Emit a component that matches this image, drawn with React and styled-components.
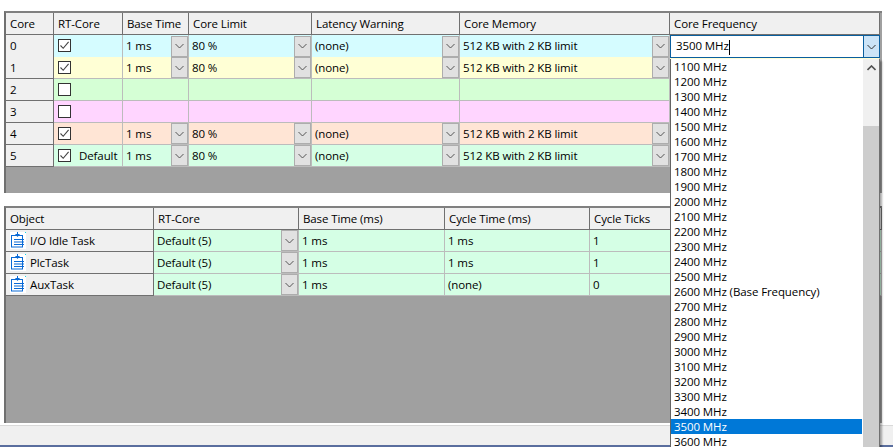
import React from "react";
import styled, { createGlobalStyle } from "styled-components";

const Global = createGlobalStyle`
  html, body { margin: 0; padding: 0; height: 447px; overflow: hidden; background: #fff; }
  body { font-family: "Open Sans", "Noto Sans", "Liberation Sans", sans-serif; font-size: 11.5px; letter-spacing: -0.1px; color: #000; }
`;

const Page = styled.div`
  position: relative;
  width: 893px;
  height: 447px;
  padding-top: 11px;
  box-sizing: border-box;
  display: flex;
  flex-direction: column;
  overflow: hidden;
`;

const Panel = styled.section`
  margin-left: 4px;
  margin-top: ${(p) => p.$top}px;
  width: 878px;
  height: ${(p) => p.$height}px;
  box-sizing: border-box;
  background: #a0a0a0;
  border-left: 2px solid #707070;
  border-top: 2px solid #808080;
  flex: none;
`;

const Row = styled.div`
  display: grid;
  grid-template-columns: ${(p) => p.$cols};
  height: 22px;
`;

const Head = styled.div`
  background: #f0f0f0;
  box-sizing: border-box;
  border-right: 1px solid #707070;
  border-bottom: 1px solid #707070;
  padding: 0 0 1px 4px;
  display: flex;
  align-items: center;
  white-space: nowrap;
  overflow: hidden;
`;

const RowHead = styled(Head)`
  gap: 4px;
`;

const IconBox = styled.span`
  width: 16px;
  height: 17px;
  flex: none;
  background: #fff;
  display: flex;
  align-items: center;
  justify-content: center;
`;

const Cell = styled.div`
  background: ${(p) => p.$bg};
  box-sizing: border-box;
  border-right: 1px solid #bcbcbc;
  border-bottom: 1px solid #bcbcbc;
  padding: 0 0 1px 3px;
  display: flex;
  align-items: center;
  justify-content: space-between;
  white-space: nowrap;
  overflow: hidden;
`;

const CheckCell = styled(Cell)`
  justify-content: flex-start;
  padding-left: 4px;
  gap: 8px;
`;

const Check = styled.span`
  width: 13px;
  height: 13px;
  box-sizing: border-box;
  flex: none;
  border: 1px solid #333;
  background: #fff;
  display: flex;
  align-items: center;
  justify-content: center;
`;

const Arrow = styled.span`
  width: 17px;
  height: 21px;
  box-sizing: border-box;
  flex: none;
  margin-top: 1px;
  background: #e1e1e1;
  border: 1px solid #adadad;
  display: flex;
  align-items: center;
  justify-content: center;
`;

const ActiveCell = styled.div`
  box-sizing: border-box;
  height: 23px;
  background: #fff;
  border: 1px solid #0a5f9e;
  display: flex;
  align-items: center;
  justify-content: space-between;
  padding-left: 5px;
  position: relative;
  z-index: 2;
`;

const Caret = styled.span`
  display: inline-block;
  width: 1px;
  height: 15px;
  background: #000;
  vertical-align: middle;
`;

const ActiveArrow = styled.span`
  width: 16px;
  height: 21px;
  box-sizing: border-box;
  border-left: 1px solid #0a5f9e;
  background: #cce4f7;
  display: flex;
  align-items: center;
  justify-content: center;
`;

const Footer = styled.div`
  margin-top: 2px;
  height: 19px;
  flex: none;
  background: #f0f0f0;
  border-top: 1px solid #d9d9d9;
`;

const Titlebar = styled.div`
  height: 2px;
  flex: none;
  background: #5a6e9e;
`;

const Dropdown = styled.div`
  position: absolute;
  left: 670px;
  top: 59px;
  width: 210px;
  height: 392px;
  box-sizing: border-box;
  background: #fff;
  border-left: 1px solid #646464;
  border-right: 1px solid #707070;
  box-shadow: 2px 2px 2px rgba(0, 0, 0, 0.35);
  display: grid;
  grid-template-columns: 1fr 16px;
  z-index: 3;
`;

const List = styled.ul`
  list-style: none;
  margin: 0;
  padding: 0;
  overflow: hidden;
`;

const Item = styled.li`
  height: 15px;
  line-height: 15px;
  margin-right: 1px;
  padding-left: 3px;
  white-space: nowrap;
  background: ${(p) => (p.$selected ? "#0078d7" : "transparent")};
  color: ${(p) => (p.$selected ? "#fff" : "#000")};
`;

const Track = styled.div`
  background: #f0f0f0;
  display: flex;
  flex-direction: column;
`;

const UpButton = styled.div`
  height: 17px;
  flex: none;
  display: flex;
  align-items: center;
  justify-content: center;
`;

const Thumb = styled.div`
  margin-top: 50px;
  flex: 1;
  background: #cdcdcd;
`;

const Chevron = ({ color = "#555" }) => (
  <svg width="9" height="6" viewBox="0 0 9 6" fill="none">
    <path d="M0.5 1 L4.5 5 L8.5 1" stroke={color} strokeWidth="1" />
  </svg>
);

const Tick = () => (
  <svg width="11" height="11" viewBox="0 0 11 11" fill="none">
    <path d="M1.5 5.5 L4.2 8.3 L9.6 1.8" stroke="#444" strokeWidth="1.1" />
  </svg>
);

const TaskIcon = () => (
  <svg width="15" height="16" viewBox="0 0 15 16" fill="none">
    <rect x="0.5" y="3.5" width="11" height="11.5" fill="#fff" stroke="#0a6ad6" />
    <path d="M3 7.5H13M3 10H13M3 12.5H13" stroke="#0a6ad6" />
    <path d="M4 2H9L6.5 5Z" fill="#0a6ad6" />
    <path d="M6.5 0V3" stroke="#0a6ad6" />
    <rect x="14" y="0" width="1" height="1" fill="#19d3e8" />
  </svg>
);

const topCols = "48px 69px 66px 123px 148px 210px 210px";
const botCols = "148px 145px 146px 145px 1fr";

const cores = [
  { id: 0, bg: "#d5fcff", on: true, full: true, active: true },
  { id: 1, bg: "#ffffd5", on: true, full: true },
  { id: 2, bg: "#d5ffd5" },
  { id: 3, bg: "#ffd5ff" },
  { id: 4, bg: "#ffe5d5", on: true, full: true },
  { id: 5, bg: "#d5ffe5", on: true, full: true, note: "Default" },
];

const tasks = [
  { name: "I/O Idle Task", cycle: "1 ms", ticks: "1" },
  { name: "PlcTask", cycle: "1 ms", ticks: "1" },
  { name: "AuxTask", cycle: "(none)", ticks: "0" },
];

const freqs = Array.from({ length: 26 }, (_, i) => 1100 + i * 100);

const Combo = ({ bg, text }) => (
  <Cell $bg={bg}>
    {text}
    <Arrow>
      <Chevron />
    </Arrow>
  </Cell>
);

export default function App() {
  return (
    <Page>
      <Global />
      <Panel $top={0} $height={182}>
        <Row $cols={topCols}>
          {["Core", "RT-Core", "Base Time", "Core Limit", "Latency Warning", "Core Memory", "Core Frequency"].map((h) => (
            <Head key={h}>{h}</Head>
          ))}
        </Row>
        {cores.map((c) => (
          <Row key={c.id} $cols={topCols}>
            <RowHead>{c.id}</RowHead>
            <CheckCell $bg={c.bg}>
              <Check>{c.on && <Tick />}</Check>
              {c.note}
            </CheckCell>
            {c.full ? (
              <>
                <Combo bg={c.bg} text="1 ms" />
                <Combo bg={c.bg} text="80 %" />
                <Combo bg={c.bg} text="(none)" />
                <Combo bg={c.bg} text="512 KB with 2 KB limit" />
              </>
            ) : (
              <>
                <Cell $bg={c.bg} />
                <Cell $bg={c.bg} />
                <Cell $bg={c.bg} />
                <Cell $bg={c.bg} />
              </>
            )}
            {c.active ? (
              <ActiveCell>
                <span>
                  3500 MHz
                  <Caret />
                </span>
                <ActiveArrow>
                  <Chevron color="#333" />
                </ActiveArrow>
              </ActiveCell>
            ) : (
              <Cell $bg={c.bg} />
            )}
          </Row>
        ))}
      </Panel>
      <Panel $top={13} $height={217}>
        <Row $cols={botCols}>
          {["Object", "RT-Core", "Base Time (ms)", "Cycle Time (ms)", "Cycle Ticks"].map((h) => (
            <Head key={h}>{h}</Head>
          ))}
        </Row>
        {tasks.map((t) => (
          <Row key={t.name} $cols={botCols}>
            <RowHead>
              <IconBox>
                <TaskIcon />
              </IconBox>
              {t.name}
            </RowHead>
            <Combo bg="#d5ffe5" text="Default (5)" />
            <Cell $bg="#d5ffe5">1 ms</Cell>
            <Cell $bg="#d5ffe5">{t.cycle}</Cell>
            <Cell $bg="#d5ffe5">{t.ticks}</Cell>
          </Row>
        ))}
      </Panel>
      <Footer />
      <Titlebar />
      <Dropdown>
        <List>
          {freqs.map((f) => (
            <Item key={f} $selected={f === 3500}>
              {f} MHz{f === 2600 ? " (Base Frequency)" : ""}
            </Item>
          ))}
        </List>
        <Track>
          <UpButton>
            <svg width="9" height="6" viewBox="0 0 9 6" fill="none">
              <path d="M0.5 5 L4.5 1 L8.5 5" stroke="#505050" strokeWidth="1.6" />
            </svg>
          </UpButton>
          <Thumb />
        </Track>
      </Dropdown>
    </Page>
  );
}
